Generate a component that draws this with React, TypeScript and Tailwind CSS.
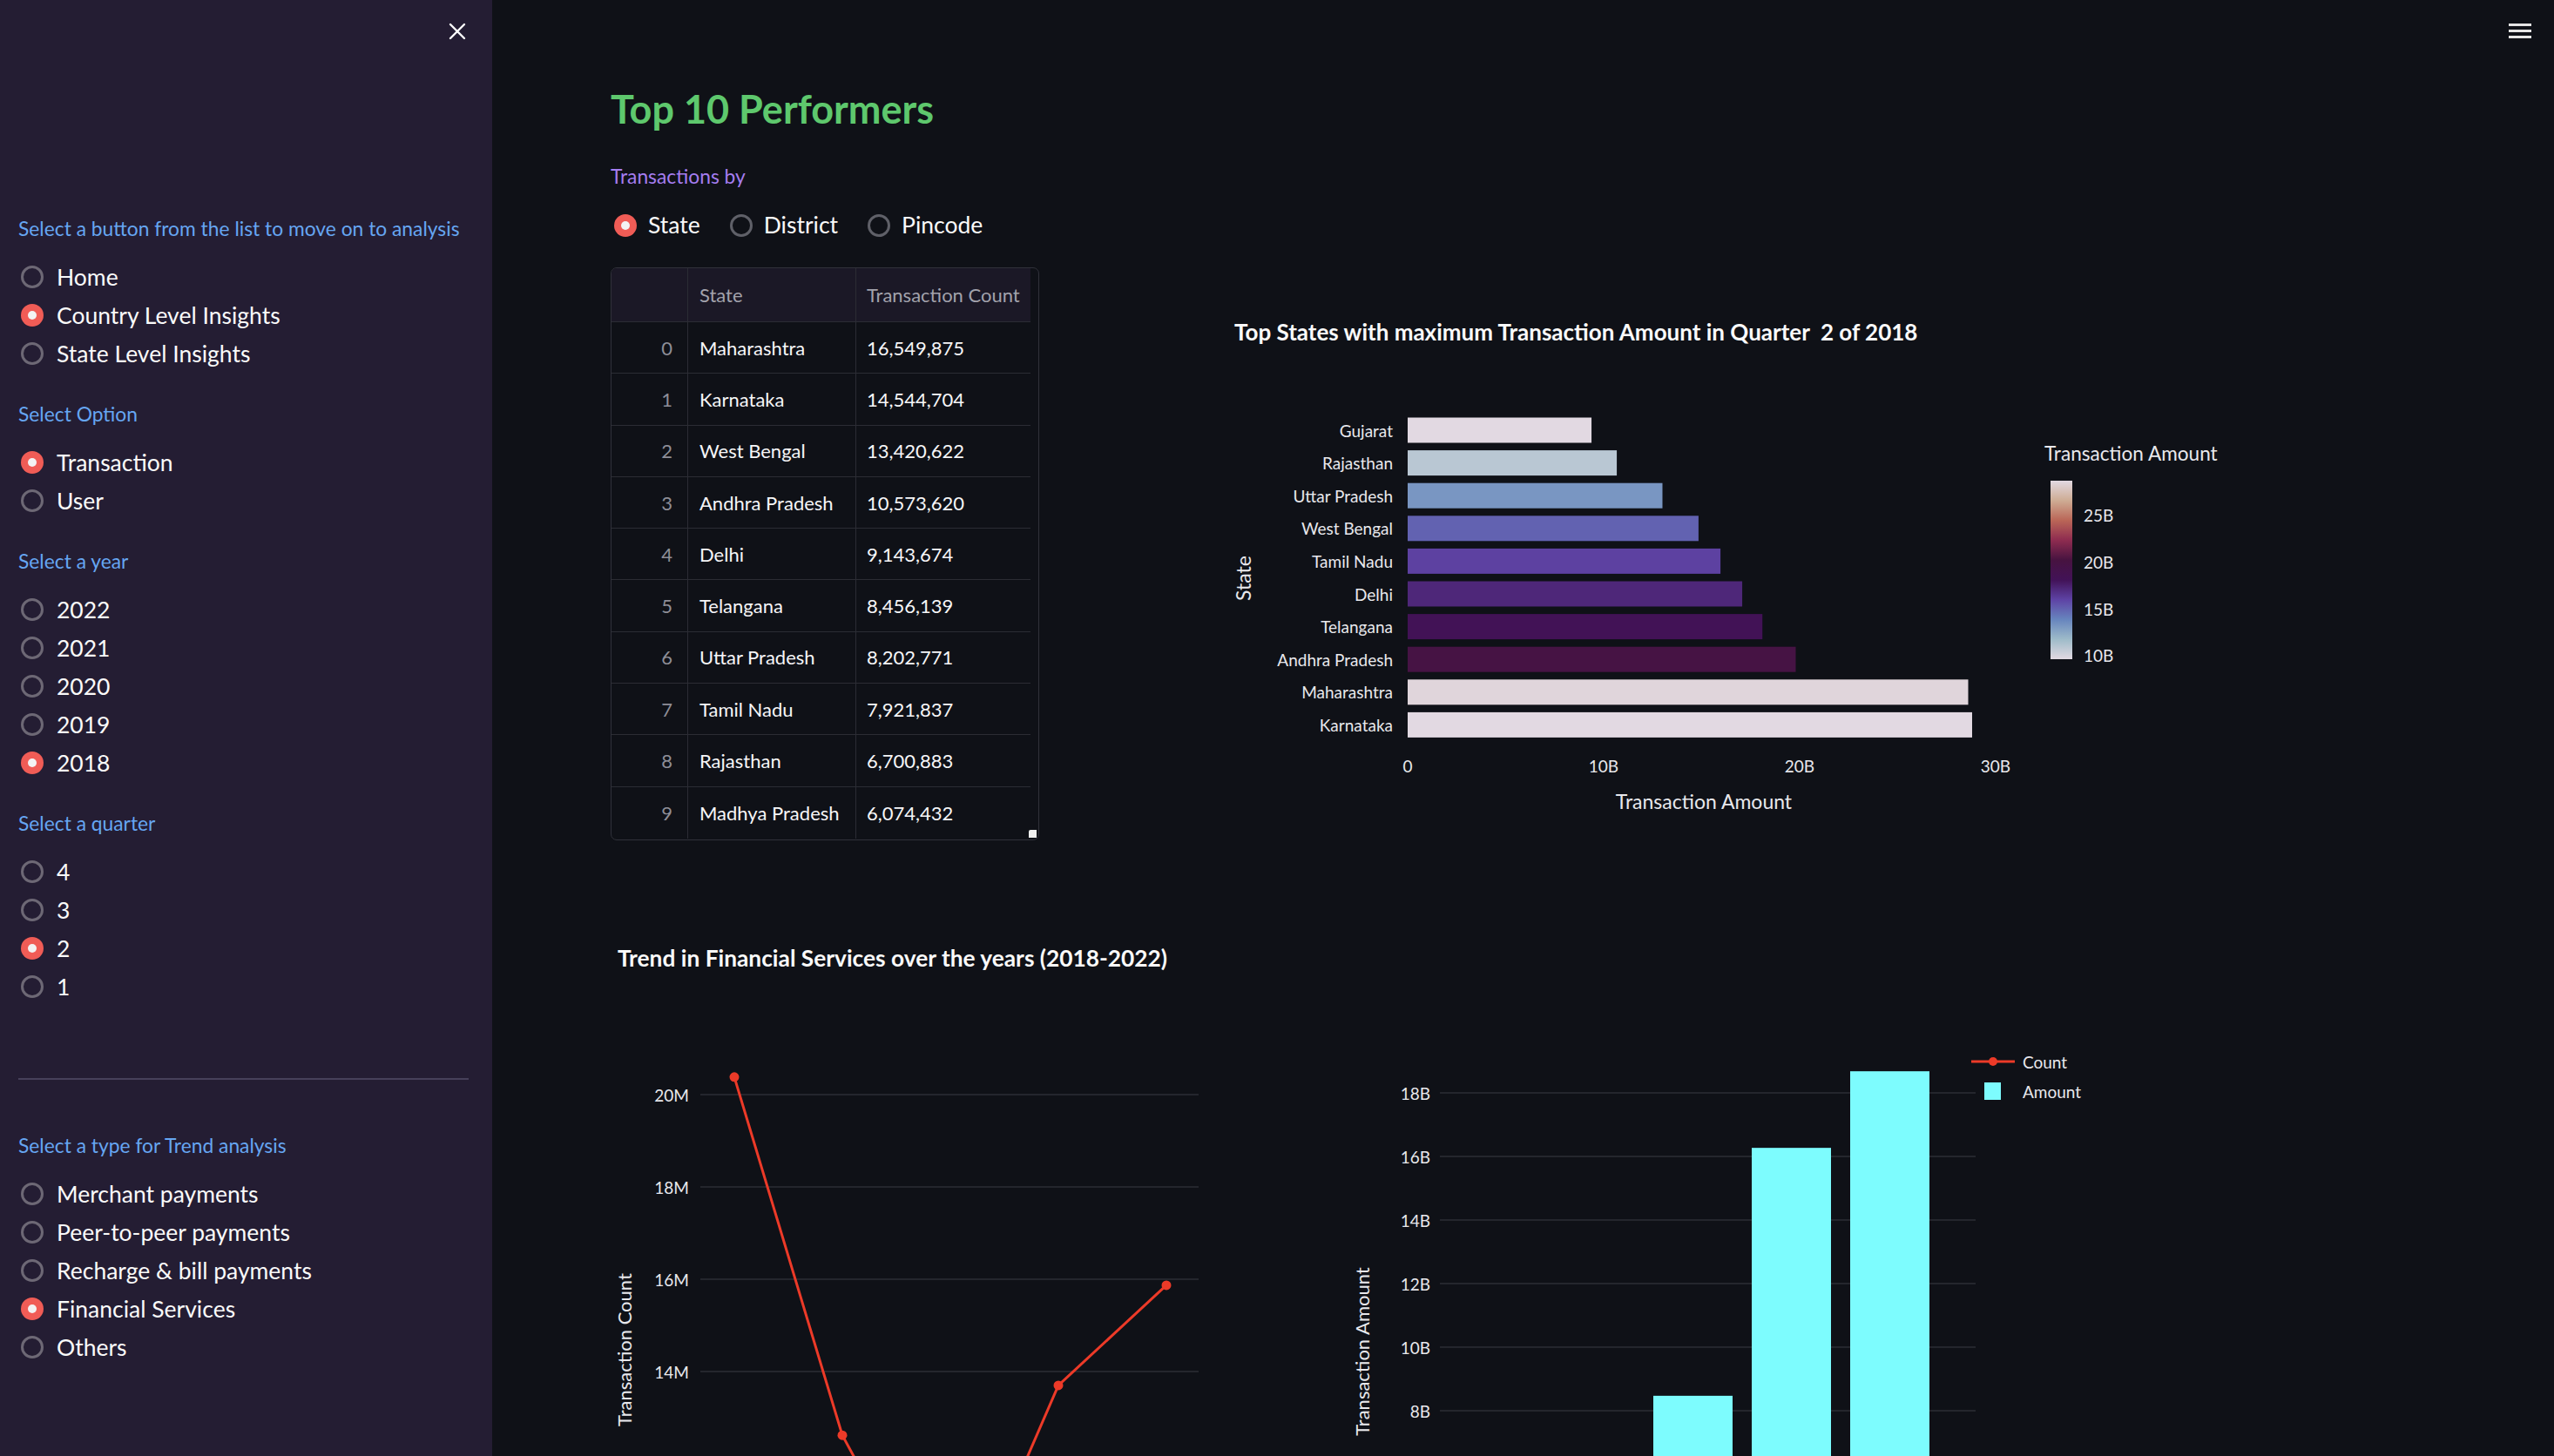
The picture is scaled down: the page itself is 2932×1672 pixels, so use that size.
import React from 'react';
import clsx from 'clsx';

const TWILIGHT = [
  '#e2d9e2',
  '#9ebbc9',
  '#6785be',
  '#5e43a5',
  '#421257',
  '#471340',
  '#8e2c50',
  '#ba6657',
  '#ceac94',
  '#e2d9e2',
];

const toRgb = (hex: string) => [1, 3, 5].map((i) => parseInt(hex.slice(i, i + 2), 16));

const twilight = (t: number) => {
  const pos = Math.min(Math.max(t, 0), 1) * (TWILIGHT.length - 1);
  const i = Math.min(Math.floor(pos), TWILIGHT.length - 2);
  const f = pos - i;
  const a = toRgb(TWILIGHT[i]);
  const b = toRgb(TWILIGHT[i + 1]);
  const c = a.map((v, k) => Math.round(v + (b[k] - v) * f));
  return `rgb(${c[0]},${c[1]},${c[2]})`;
};

const FONT = 'Lato, "Noto Sans", sans-serif';

const sidebarGroups = [
  {
    label: 'Select a button from the list to move on to analysis',
    options: ['Home', 'Country Level Insights', 'State Level Insights'],
    selected: 'Country Level Insights',
  },
  { label: 'Select Option', options: ['Transaction', 'User'], selected: 'Transaction' },
  { label: 'Select a year', options: ['2022', '2021', '2020', '2019', '2018'], selected: '2018' },
  { label: 'Select a quarter', options: ['4', '3', '2', '1'], selected: '2' },
];

const trendGroup = {
  label: 'Select a type for Trend analysis',
  options: [
    'Merchant payments',
    'Peer-to-peer payments',
    'Recharge & bill payments',
    'Financial Services',
    'Others',
  ],
  selected: 'Financial Services',
};

const topStates = [
  ['Maharashtra', '16,549,875'],
  ['Karnataka', '14,544,704'],
  ['West Bengal', '13,420,622'],
  ['Andhra Pradesh', '10,573,620'],
  ['Delhi', '9,143,674'],
  ['Telangana', '8,456,139'],
  ['Uttar Pradesh', '8,202,771'],
  ['Tamil Nadu', '7,921,837'],
  ['Rajasthan', '6,700,883'],
  ['Madhya Pradesh', '6,074,432'],
];

const amountByState: [string, number][] = [
  ['Gujarat', 9.38],
  ['Rajasthan', 10.67],
  ['Uttar Pradesh', 13.0],
  ['West Bengal', 14.84],
  ['Tamil Nadu', 15.96],
  ['Delhi', 17.07],
  ['Telangana', 18.1],
  ['Andhra Pradesh', 19.8],
  ['Maharashtra', 28.6],
  ['Karnataka', 28.8],
];

const Dot = ({ checked, onDark }: { checked: boolean; onDark?: boolean }) => (
  <span
    className={clsx(
      'flex h-[26px] w-[26px] shrink-0 items-center justify-center rounded-full',
      checked
        ? 'bg-[#f05c56]'
        : onDark
          ? 'border-[3px] border-[#5f6068] bg-[#0f1117]'
          : 'border-[3px] border-[#6d6875]',
    )}
  >
    {checked && <span className="h-[10px] w-[10px] rounded-full bg-[#f3f3f3]" />}
  </span>
);

const RadioGroup = ({
  label,
  options,
  selected,
  className,
}: {
  label: string;
  options: string[];
  selected: string;
  className?: string;
}) => (
  <div className={className}>
    <div className="h-[32px] text-[22.8px] leading-[32px] text-[#66a6f2]">{label}</div>
    <div className="mt-[18px] flex flex-col">
      {options.map((o) => (
        <div key={o} className="flex h-[44px] items-center pl-[3px]">
          <Dot checked={o === selected} />
          <span className="ml-[15px] text-[26.5px] leading-[44px] text-[#fafafa]">{o}</span>
        </div>
      ))}
    </div>
  </div>
);

const Sidebar = () => (
  <aside className="flex w-[565px] shrink-0 flex-col bg-[#241d33] pl-[21px] pr-[27px]">
    <div className="flex h-[72px] items-center justify-end pr-[3px]">
      <svg width="20" height="20" viewBox="0 0 20 20" stroke="#ffffff" strokeWidth="2.4" strokeLinecap="round">
        <path d="M2 2 L18 18 M18 2 L2 18" />
      </svg>
    </div>
    <RadioGroup {...sidebarGroups[0]} className="mt-[174px]" />
    {sidebarGroups.slice(1).map((g) => (
      <RadioGroup key={g.label} {...g} className="mt-[31px]" />
    ))}
    <div className="mt-[83px] h-[2px] bg-[#46405a]" />
    <RadioGroup {...trendGroup} className="mt-[59px]" />
  </aside>
);

const TopTable = () => (
  <div className="relative h-[658px] w-[492px] shrink-0 overflow-hidden rounded-[7px] border border-[#30313a] text-[22px]">
    <div className="flex h-[62px] w-[481px] border-b border-[#2b2c34] bg-[#1b1826] text-[#a2a2ac]">
      <div className="w-[88px] border-r border-[#2b2c34]" />
      <div className="flex w-[193px] items-center border-r border-[#2b2c34] pl-[13px]">State</div>
      <div className="flex flex-1 items-center pl-[12px]">Transaction Count</div>
    </div>
    {topStates.map(([state, count], i) => (
      <div
        key={state}
        className={clsx('flex h-[59.3px] w-[481px] text-[#f6f6f8]', i < 9 && 'border-b border-[#2b2c34]')}
      >
        <div className="flex w-[88px] items-center justify-end border-r border-[#2b2c34] pr-[17px] text-[#8e8e97]">
          {i}
        </div>
        <div className="flex w-[193px] items-center border-r border-[#2b2c34] pl-[13px]">{state}</div>
        <div className="flex flex-1 items-center pl-[12px]">{count}</div>
      </div>
    ))}
    <div className="absolute bottom-[2px] right-[2px] h-[9px] w-[9px] rounded-tl-[2px] bg-[#f0f0f0]" />
  </div>
);

const StateBarChart = () => {
  const min = 9.38;
  const max = 28.8;
  const px = 22.5;
  return (
    <svg width="1200" height="660" fontFamily={FONT} className="ml-[207px] shrink-0">
      <defs>
        <linearGradient id="twilight" x1="0" y1="1" x2="0" y2="0">
          {TWILIGHT.map((c, i) => (
            <stop key={i} offset={i / (TWILIGHT.length - 1)} stopColor={c} />
          ))}
        </linearGradient>
      </defs>
      <text
        x="17"
        y="74"
        fontSize="26"
        fontWeight="700"
        fill="#fafafa"
        dominantBaseline="central"
        style={{ whiteSpace: 'pre' }}
      >
        {'Top States with maximum Transaction Amount in Quarter  2 of 2018'}
      </text>
      {amountByState.map(([name, v], i) => {
        const cy = 187 + i * 37.6;
        return (
          <g key={name}>
            <text x="199" y={cy} fontSize="19" fill="#e8e8ec" textAnchor="end" dominantBaseline="central">
              {name}
            </text>
            <rect x="216" y={cy - 14.5} width={v * px} height="29" fill={twilight((v - min) / (max - min))} />
          </g>
        );
      })}
      {['0', '10B', '20B', '30B'].map((t, i) => (
        <text key={t} x={216 + i * 225} y="572" fontSize="19" fill="#e8e8ec" textAnchor="middle" dominantBaseline="central">
          {t}
        </text>
      ))}
      <text x="556" y="613" fontSize="23" fill="#e8e8ec" textAnchor="middle" dominantBaseline="central">
        Transaction Amount
      </text>
      <text
        x="27"
        y="357"
        fontSize="23"
        fill="#e8e8ec"
        textAnchor="middle"
        dominantBaseline="central"
        transform="rotate(-90 27 357)"
      >
        State
      </text>
      <text x="947" y="213" fontSize="22.6" fill="#e8e8ec" dominantBaseline="central">
        Transaction Amount
      </text>
      <rect x="954" y="245" width="25" height="205" fill="url(#twilight)" />
      {[
        ['25B', 284],
        ['20B', 338],
        ['15B', 392],
        ['10B', 445],
      ].map(([t, y]) => (
        <text key={t} x="992" y={y} fontSize="19" fill="#e8e8ec" dominantBaseline="central">
          {t}
        </text>
      ))}
    </svg>
  );
};

const TrendChart = () => {
  const countY = (m: number) => 217 + (20 - m) * 53;
  const amountY = (b: number) => 215 + (18 - b) * 36.5;
  const counts = [20.38, 12.62, 8.3, 13.7, 15.87];
  const amounts = [4.9, 5.7, 8.47, 16.27, 18.68];
  const pts = counts.map((c, i) => [142 + i * 124, countY(c)]);
  return (
    <svg width="1700" height="632" fontFamily={FONT} className="mt-[73px] shrink-0">
      <text x="8" y="60" fontSize="26.3" fontWeight="700" fill="#fafafa" dominantBaseline="central">
        Trend in Financial Services over the years (2018-2022)
      </text>
      {[20, 18, 16, 14].map((m) => (
        <g key={m}>
          <line x1="103" x2="675" y1={countY(m)} y2={countY(m)} stroke="#2c2e36" strokeWidth="1.5" />
          <text x="90" y={countY(m)} fontSize="19" fill="#e8e8ec" textAnchor="end" dominantBaseline="central">
            {m}M
          </text>
        </g>
      ))}
      <text
        x="15"
        y="510"
        fontSize="22"
        fill="#e8e8ec"
        textAnchor="middle"
        dominantBaseline="central"
        transform="rotate(-90 15 510)"
      >
        Transaction Count
      </text>
      <polyline points={pts.map((p) => p.join(',')).join(' ')} fill="none" stroke="#ec3a28" strokeWidth="3" />
      {pts.map(([x, y], i) => (
        <circle key={i} cx={x} cy={y} r="5.5" fill="#ec3a28" />
      ))}

      {[18, 16, 14, 12, 10, 8].map((b) => (
        <g key={b}>
          <line x1="952" x2="1567" y1={amountY(b)} y2={amountY(b)} stroke="#2c2e36" strokeWidth="1.5" />
          <text x="941" y={amountY(b)} fontSize="19" fill="#e8e8ec" textAnchor="end" dominantBaseline="central">
            {b}B
          </text>
        </g>
      ))}
      <line x1="952" x2="1567" y1={amountY(6)} y2={amountY(6)} stroke="#2c2e36" strokeWidth="1.5" />
      <text
        x="862"
        y="512"
        fontSize="22"
        fill="#e8e8ec"
        textAnchor="middle"
        dominantBaseline="central"
        transform="rotate(-90 862 512)"
      >
        Transaction Amount
      </text>
      {amounts.map((b, i) => (
        <rect key={i} x={971 + i * 113} y={amountY(b)} width="91" height={700} fill="#7dfcfe" />
      ))}

      <line x1="1562" x2="1612" y1="179" y2="179" stroke="#ec3a28" strokeWidth="3" />
      <circle cx="1587" cy="179" r="5" fill="#ec3a28" />
      <text x="1621" y="179" fontSize="19" fill="#e8e8ec" dominantBaseline="central">
        Count
      </text>
      <rect x="1577" y="203" width="19" height="20" fill="#7dfcfe" />
      <text x="1621" y="213" fontSize="19" fill="#e8e8ec" dominantBaseline="central">
        Amount
      </text>
    </svg>
  );
};

const App: React.FC = () => {
  return (
    <div className="flex h-[1672px] w-full overflow-hidden bg-[#0f1117] font-['Lato','Noto_Sans',sans-serif]">
      <Sidebar />
      <main className="relative flex min-w-0 flex-1 flex-col pl-[136px]">
        <button className="absolute right-[26px] top-[27px] flex flex-col gap-[4px]" aria-label="Menu">
          <span className="h-[3px] w-[26px] bg-[#e4e4e4]" />
          <span className="h-[3px] w-[26px] bg-[#e4e4e4]" />
          <span className="h-[3px] w-[26px] bg-[#e4e4e4]" />
        </button>
        <h3 className="mt-[98px] h-[54px] text-[45px] font-bold leading-[54px] text-[#5ec86d]">Top 10 Performers</h3>
        <div className="mt-[34px] h-[32px] text-[22.8px] leading-[32px] text-[#a57df0]">Transactions by</div>
        <div className="mt-[20px] flex h-[44px] items-center gap-[34px] pl-[4px]">
          {['State', 'District', 'Pincode'].map((o) => (
            <div key={o} className="flex items-center">
              <Dot checked={o === 'State'} onDark />
              <span className="ml-[13px] text-[26.5px] text-[#fafafa]">{o}</span>
            </div>
          ))}
        </div>
        <div className="mt-[27px] flex items-start">
          <TopTable />
          <StateBarChart />
        </div>
        <TrendChart />
      </main>
    </div>
  );
};

export default App;
